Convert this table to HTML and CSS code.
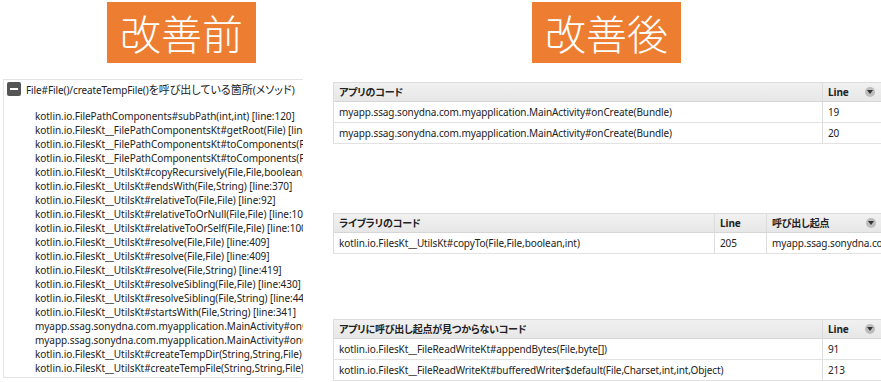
FILE: index.html
```html
<!DOCTYPE html>
<html lang="ja">
<head>
<meta charset="utf-8">
<link rel="stylesheet" href="styles.css">
</head>
<body>
<div class="page">
  <section class="col-left">
    <div class="badge badge-left">改善前</div>
    <div class="tree">
      <div class="tree-head">
        <span class="toggle"><span class="bar"></span></span>
        <span class="tree-title">File#File()/createTempFile()<span class="ja">を呼び出している箇所</span>(<span class="ja">メソッド</span>)</span>
      </div>
      <ul class="tree-list">
        <li>kotlin.io.FilePathComponents#subPath(int,int) [line:120]</li>
        <li>kotlin.io.FilesKt__FilePathComponentsKt#getRoot(File) [line:25]</li>
        <li>kotlin.io.FilesKt__FilePathComponentsKt#toComponents(File) [line:121]</li>
        <li>kotlin.io.FilesKt__FilePathComponentsKt#toComponents(File) [line:125]</li>
        <li>kotlin.io.FilesKt__UtilsKt#copyRecursively(File,File,boolean,Function2) [line:230]</li>
        <li>kotlin.io.FilesKt__UtilsKt#endsWith(File,String) [line:370]</li>
        <li>kotlin.io.FilesKt__UtilsKt#relativeTo(File,File) [line:92]</li>
        <li>kotlin.io.FilesKt__UtilsKt#relativeToOrNull(File,File) [line:108]</li>
        <li>kotlin.io.FilesKt__UtilsKt#relativeToOrSelf(File,File) [line:100]</li>
        <li>kotlin.io.FilesKt__UtilsKt#resolve(File,File) [line:409]</li>
        <li>kotlin.io.FilesKt__UtilsKt#resolve(File,File) [line:409]</li>
        <li>kotlin.io.FilesKt__UtilsKt#resolve(File,String) [line:419]</li>
        <li>kotlin.io.FilesKt__UtilsKt#resolveSibling(File,File) [line:430]</li>
        <li>kotlin.io.FilesKt__UtilsKt#resolveSibling(File,String) [line:440]</li>
        <li>kotlin.io.FilesKt__UtilsKt#startsWith(File,String) [line:341]</li>
        <li>myapp.ssag.sonydna.com.myapplication.MainActivity#onCreate(Bundle) [line:19]</li>
        <li>myapp.ssag.sonydna.com.myapplication.MainActivity#onCreate(Bundle) [line:20]</li>
        <li>kotlin.io.FilesKt__UtilsKt#createTempDir(String,String,File) [line:34]</li>
        <li>kotlin.io.FilesKt__UtilsKt#createTempFile(String,String,File) [line:56]</li>
      </ul>
    </div>
  </section>

  <section class="col-right">
    <div class="badge badge-right">改善後</div>

    <div class="grid grid-app">
      <div class="cell head"><span class="ja">アプリのコード</span></div>
      <div class="cell head last">Line<span class="sort"></span></div>
      <div class="cell">myapp.ssag.sonydna.com.myapplication.MainActivity#onCreate(Bundle)</div>
      <div class="cell last">19</div>
      <div class="cell">myapp.ssag.sonydna.com.myapplication.MainActivity#onCreate(Bundle)</div>
      <div class="cell last">20</div>
    </div>

    <div class="grid grid-lib">
      <div class="cell head"><span class="ja">ライブラリのコード</span></div>
      <div class="cell head">Line</div>
      <div class="cell head last"><span class="ja">呼び出し起点</span><span class="sort"></span></div>
      <div class="cell">kotlin.io.FilesKt__UtilsKt#copyTo(File,File,boolean,int)</div>
      <div class="cell">205</div>
      <div class="cell last">myapp.ssag.sonydna.com.myapplication.MainActivity#onCreate(Bundle)</div>
    </div>

    <div class="grid grid-orphan">
      <div class="cell head"><span class="ja">アプリに呼び出し起点が見つからないコード</span></div>
      <div class="cell head last">Line<span class="sort"></span></div>
      <div class="cell">kotlin.io.FilesKt__FileReadWriteKt#appendBytes(File,byte[])</div>
      <div class="cell last">91</div>
      <div class="cell">kotlin.io.FilesKt__FileReadWriteKt#bufferedWriter$default(File,Charset,int,int,Object)</div>
      <div class="cell last">213</div>
    </div>
  </section>
</div>
</body>
</html>
```

FILE: styles.css
```css
* { box-sizing: border-box; }

html, body {
  margin: 0;
  padding: 0;
  background: #ffffff;
  overflow: hidden;
}

body {
  width: 881px;
  height: 382px;
  font-family: "Noto Sans", "Noto Sans CJK JP", sans-serif;
  font-size: 10px;
  letter-spacing: -0.1px;
  color: #222222;
}

.ja {
  font-family: "Noto Sans CJK JP", sans-serif;
  font-size: 11px;
  letter-spacing: 0;
  font-feature-settings: "palt";
}

.head .ja {
  font-size: 10px;
  letter-spacing: -0.2px;
}

.page {
  display: grid;
  grid-template-columns: 333px 560px;
  width: 893px;
}

.badge {
  width: 149px;
  height: 61px;
  margin-top: 2px;
  background: #ed7d31;
  color: #ffffff;
  font-family: "Noto Sans CJK JP", sans-serif;
  font-size: 41px;
  font-weight: 300;
  line-height: 61px;
  text-align: center;
  letter-spacing: 0;
}

.badge-left { margin-left: 107px; }
.badge-right { margin-left: 199px; }

/* Left tree panel */
.col-left {
  display: flex;
  flex-direction: column;
}

.tree {
  margin-top: 16px;
  margin-left: 3px;
  width: 300px;
  height: 299px;
  border: 1px solid #e4e4e4;
  border-right: none;
  padding-top: 2px;
  overflow: hidden;
  white-space: nowrap;
}

.tree-head {
  display: flex;
  align-items: center;
  height: 14px;
  padding-left: 3px;
}

.toggle {
  width: 14px;
  height: 14px;
  border-radius: 2px;
  background: #555555;
  display: flex;
  align-items: center;
  justify-content: center;
  flex-shrink: 0;
}

.toggle .bar {
  width: 8px;
  height: 2px;
  background: #ffffff;
}

.tree-title {
  margin-left: 5px;
  line-height: 14px;
}

.tree-list {
  list-style: none;
  margin: 13px 0 0 0;
  padding: 0 0 0 31px;
  letter-spacing: -0.05px;
}

.tree-list li {
  height: 14px;
  line-height: 14px;
}

/* Right tables */
.col-right {
  display: flex;
  flex-direction: column;
  overflow: hidden;
}

.grid {
  display: grid;
  width: 556px;
  border: 1px solid #dcdcdc;
  border-right: none;
  border-bottom: none;
  white-space: nowrap;
}

.grid-app { margin-top: 19px; grid-template-columns: 489px 1fr; }
.grid-lib { margin-top: 69px; grid-template-columns: 381px 52px 1fr; }
.grid-orphan { margin-top: 65px; grid-template-columns: 489px 1fr; }

.cell {
  height: 21px;
  line-height: 20px;
  padding-left: 5px;
  border-bottom: 1px solid #e2e2e2;
  border-right: 1px solid #dcdcdc;
  overflow: hidden;
  position: relative;
}

.cell.last { border-right: none; }

.cell.head {
  height: 19px;
  line-height: 18px;
  font-weight: 700;
  background: linear-gradient(#f1f1f1, #e7e7e7);
  border-bottom: 1px solid #d6d6d6;
}

.sort {
  position: absolute;
  left: 42px;
  top: 4px;
  width: 10px;
  height: 10px;
  border-radius: 50%;
  background: #bdbdbd;
}

.grid-lib .head.last .sort { left: 99px; }

.sort::after {
  content: "";
  position: absolute;
  left: 2px;
  top: 3px;
  border-left: 3px solid transparent;
  border-right: 3px solid transparent;
  border-top: 4px solid #333333;
}
```
